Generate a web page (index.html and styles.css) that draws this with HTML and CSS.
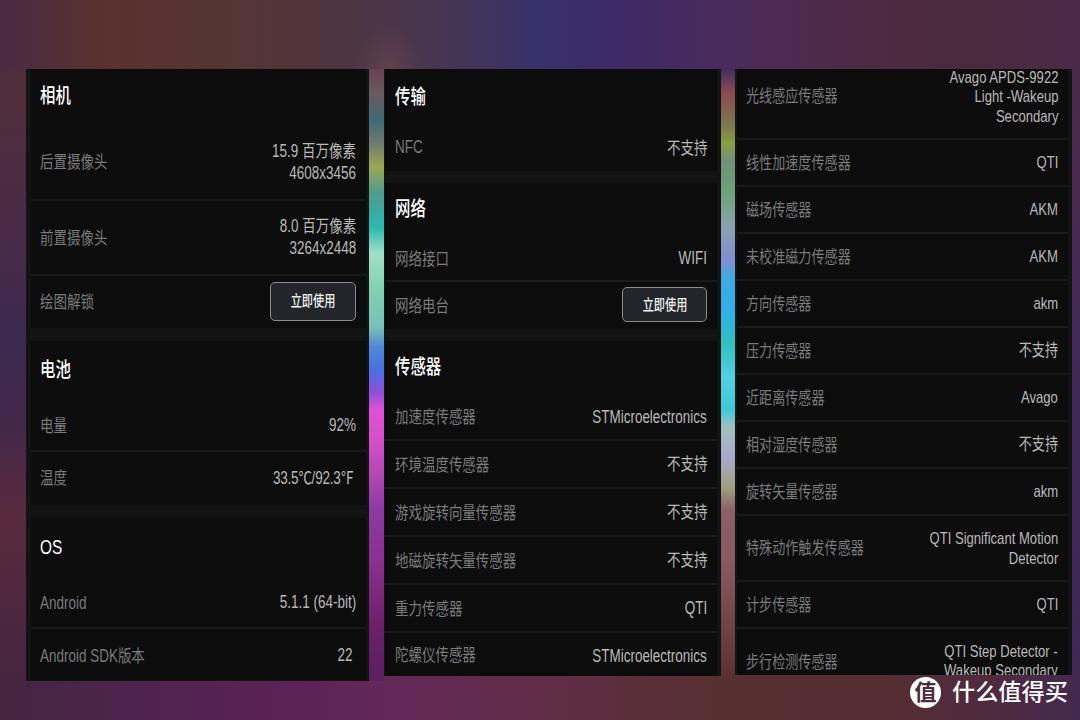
FILE: index.html
```html
<!DOCTYPE html>
<html lang="zh-CN">
<head>
<meta charset="utf-8">
<title>设备信息</title>
<link rel="stylesheet" href="styles.css">
</head>
<body>
<main class="stage">
  <section class="panel panel-left">
    <div class="group">
      <h2 class="row head up4 h55"><span class="t">相机</span></h2>
      <div class="row h75"><span class="t lab up2">后置摄像头</span><span class="t val two">15.9 百万像素<br>4608x3456</span></div>
      <div class="row sep h75"><span class="t lab">前置摄像头</span><span class="t val two">8.0 百万像素<br>3264x2448</span></div>
      <div class="row sep h54"><span class="t lab up2">绘图解锁</span><button class="btn btn-tall"><span class="t">立即使用</span></button></div>
    </div>
    <div class="group">
      <h2 class="row head up2 h56"><span class="t">电池</span></h2>
      <div class="row h53"><span class="t lab lt">电量</span><span class="t val">92%</span></div>
      <div class="row sep h55"><span class="t lab up2">温度</span><span class="t val in2 two">33.5℃/92.3℉</span></div>
    </div>
    <div class="group last">
      <h2 class="row head down2 h56"><span class="t">OS</span></h2>
      <div class="row h53"><span class="t lab lt3">Android</span><span class="t val">5.1.1 (64-bit)</span></div>
      <div class="row sep h53"><span class="t lab lt">Android SDK版本</span><span class="t val in3">22</span></div>
    </div>
  </section>

  <div class="strip strip-a"></div>

  <section class="panel panel-mid">
    <div class="group">
      <h2 class="row head h53"><span class="t">传输</span></h2>
      <div class="row h49"><span class="t lab lt">NFC</span><span class="t val">不支持</span></div>
    </div>
    <div class="group">
      <h2 class="row head up2 h51"><span class="t">网络</span></h2>
      <div class="row h46"><span class="t lab">网络接口</span><span class="t val">WIFI</span></div>
      <div class="row sep h49"><span class="t lab">网络电台</span><button class="btn"><span class="t">立即使用</span></button></div>
    </div>
    <div class="group last">
      <h2 class="row head up2 h50"><span class="t">传感器</span></h2>
      <div class="row h48"><span class="t lab">加速度传感器</span><span class="t val lt2">STMicroelectronics</span></div>
      <div class="row sep h48"><span class="t lab">环境温度传感器</span><span class="t val">不支持</span></div>
      <div class="row sep h48"><span class="t lab">游戏旋转向量传感器</span><span class="t val">不支持</span></div>
      <div class="row sep h48"><span class="t lab">地磁旋转矢量传感器</span><span class="t val">不支持</span></div>
      <div class="row sep h48"><span class="t lab">重力传感器</span><span class="t val">QTI</span></div>
      <div class="row sep h45"><span class="t lab">陀螺仪传感器</span><span class="t val lt2">STMicroelectronics</span></div>
    </div>
  </section>

  <div class="strip strip-b"></div>

  <section class="panel panel-right">
    <div class="group last">
      <div class="row h69"><span class="t lab up2">光线感应传感器</span><span class="t val three">Avago APDS-9922<br>Light -Wakeup<br>Secondary</span></div>
      <div class="row sep h47"><span class="t lab">线性加速度传感器</span><span class="t val">QTI</span></div>
      <div class="row sep h47"><span class="t lab">磁场传感器</span><span class="t val">AKM</span></div>
      <div class="row sep h47"><span class="t lab">未校准磁力传感器</span><span class="t val">AKM</span></div>
      <div class="row sep h47"><span class="t lab">方向传感器</span><span class="t val">akm</span></div>
      <div class="row sep h47"><span class="t lab">压力传感器</span><span class="t val">不支持</span></div>
      <div class="row sep h47"><span class="t lab">近距离传感器</span><span class="t val">Avago</span></div>
      <div class="row sep h47"><span class="t lab">相对湿度传感器</span><span class="t val">不支持</span></div>
      <div class="row sep h47"><span class="t lab">旋转矢量传感器</span><span class="t val">akm</span></div>
      <div class="row sep h66"><span class="t lab up2">特殊动作触发传感器</span><span class="t val three">QTI Significant Motion<br>Detector</span></div>
      <div class="row sep h47"><span class="t lab">计步传感器</span><span class="t val">QTI</span></div>
      <div class="row sep h68"><span class="t lab up2">步行检测传感器</span><span class="t val two">QTI Step Detector -<br>Wakeup Secondary</span></div>
    </div>
  </section>
</main>

<div class="mark">
  <span class="mark-badge">值</span>
  <span class="mark-name">什么值得买</span>
</div>
</body>
</html>
```

FILE: styles.css
```css
* {
  box-sizing: border-box;
}

html,
body {
  margin: 0;
  height: 720px;
  overflow: hidden;
}

body {
  position: relative;
  font-family: "Liberation Sans", "Noto Sans CJK SC", sans-serif;
  font-size: 17.5px;
  background-color: #4a2a45;
  background-image:
    radial-gradient(ellipse 34px 46px at 388px 72px, #62404a 0, rgba(98, 64, 74, 0) 100%),
    linear-gradient(90deg, #4b2a42 0, #5a322f 110px, #553536 250px, #4e3540 340px, #483650 430px, #38316a 540px, #3d2a66 620px, #4a2a5c 720px, #4f2a42 880px, #4a2a3c 960px, #4a2a48 1080px),
    linear-gradient(90deg, #44263f 0, #50234f 150px, #5c2258 300px, #642858 400px, #5f2d44 560px, #572f31 720px, #552e32 880px, #4f2a40 1000px, #44294f 1080px),
    linear-gradient(180deg, #4d2c40 0, #4f2e3a 100px, #482a48 240px, #3b2a50 340px, #43284a 420px, #5a2a3c 520px, #4a2640 640px, #44263f 720px),
    linear-gradient(180deg, #4a2a48 0, #4a2a50 200px, #3d2a58 400px, #3f2858 600px, #44294f 720px);
  background-repeat: no-repeat;
  background-size: 100% 70px, 100% 70px, 100% 50px, 27px 100%, 9px 100%;
  background-position: 0 0, 0 0, 0 100%, 0 0, 100% 0;
}

.stage {
  display: flex;
  align-items: flex-start;
  padding: 69px 0 0 26px;
}

.panel {
  flex: none;
  overflow: hidden;
  background: #131313;
}

.panel-left {
  width: 343px;
  height: 612px;
  padding: 0 3px 0 5px;
}

.panel-mid {
  width: 337px;
  height: 607px;
  padding: 0 4px 0 1px;
}

.panel-mid .row {
  padding-left: 10px;
}

.panel-right {
  width: 337px;
  height: 606px;
  padding: 0 4px 0 2px;
}

.strip {
  flex: none;
  height: 612px;
}

.strip-a {
  width: 15px;
  background: linear-gradient(180deg, #6a4050 0, #6a5a60 24px, #3e6a72 51px, #707a70 74px, #9aa850 98px, #4f9a90 124px, #2bb8ae 158px, #a0e0c8 184px, #7fd0b0 224px, #7ac0b8 258px, #5088d8 278px, #4a70e0 301px, #9050d8 324px, #e050d8 341px, #d050c8 374px, #b048b0 408px, #8a3aa0 441px, #8a3090 491px, #6a2068 558px, #5a2060 612px);
}

.strip-b {
  width: 14px;
  height: 608px;
  background: linear-gradient(180deg, #40305c 0, #8a4a50 24px, #7a7a50 58px, #88a040 74px, #70907a 91px, #70a078 124px, #8aa0b0 158px, #8090d0 191px, #40a8e0 208px, #30b0e8 241px, #30c0c0 274px, #50d0e0 308px, #40c8d8 341px, #a0c0c0 358px, #a8a8c8 391px, #a0a080 418px, #8a6068 441px, #8a5a60 491px, #5a3030 608px);
}

.group {
  margin-bottom: 13px;
  background: #0c0c0d;
}

.panel-mid .group {
  margin-bottom: 12px;
}

.group.last {
  margin-bottom: 0;
}

.row {
  display: flex;
  align-items: center;
  justify-content: space-between;
  margin: 0;
  padding: 0 10px 0 9px;
}

.sep {
  padding-bottom: 2px;
  border-top: 2px solid #1a1a1b;
}

.head {
  font-size: 20px;
  font-weight: 500;
  color: #fff;
}

.head.up4 {
  padding-bottom: 4px;
}

.head.up2 {
  padding-bottom: 2px;
}

.head.down2 {
  padding-top: 2px;
}

.t {
  display: inline-block;
  white-space: nowrap;
  transform: scaleX(0.77);
  transform-origin: left center;
}

.lab {
  flex: 1 1 0;
  min-width: 0;
  color: #7a7a7a;
}

.lab.up2 {
  padding-bottom: 2px;
}

.lab.lt {
  padding-top: 2px;
}

.lab.lt3 {
  padding-top: 6px;
}

.val {
  flex: none;
  padding-top: 2px;
  color: #b9b9b9;
  line-height: 22px;
  text-align: right;
  transform-origin: right center;
}

.val.two {
  padding-top: 0;
}

.val.three {
  padding-top: 3px;
}

.val.lt2 {
  padding-top: 4px;
}

.in2 {
  margin-right: 2px;
  letter-spacing: -0.3px;
}

.in3 {
  margin-right: 4px;
}

.panel-right .t {
  font-size: 17px;
}

.panel-right .val {
  line-height: 19.5px;
}

.h45 { height: 45px; }
.h46 { height: 46px; }
.h47 { height: 47px; }
.h48 { height: 48px; }
.h49 { height: 49px; }
.h50 { height: 50px; }
.h51 { height: 51px; }
.h53 { height: 53px; }
.h54 { height: 54px; }
.h55 { height: 55px; }
.h56 { height: 56px; }
.h66 { height: 66px; }
.h68 { height: 68px; }
.h69 { height: 69px; padding-bottom: 16px; }
.h75 { height: 75px; }

.btn {
  flex: none;
  width: 85px;
  height: 35px;
  padding: 0 0 2px;
  border: 1px solid #8c8c8c;
  border-radius: 5px;
  background: #23252a;
  color: #f2f2f2;
  font: 500 14.5px "Liberation Sans", "Noto Sans CJK SC", sans-serif;
}

.btn-tall {
  width: 86px;
  height: 39px;
  padding-bottom: 3px;
}

.btn .t {
  transform-origin: center;
}

.mark {
  position: absolute;
  left: 910px;
  top: 677px;
  display: flex;
  align-items: center;
  gap: 11px;
}

.mark-badge {
  display: flex;
  align-items: center;
  justify-content: center;
  width: 31px;
  height: 31px;
  border-radius: 50%;
  background: #fff;
  color: #4a2a38;
  font-size: 22px;
  font-weight: 700;
  line-height: 1;
}

.mark-name {
  color: #fff;
  font-size: 23.2px;
  font-weight: 500;
  line-height: 31px;
  white-space: nowrap;
}
```
